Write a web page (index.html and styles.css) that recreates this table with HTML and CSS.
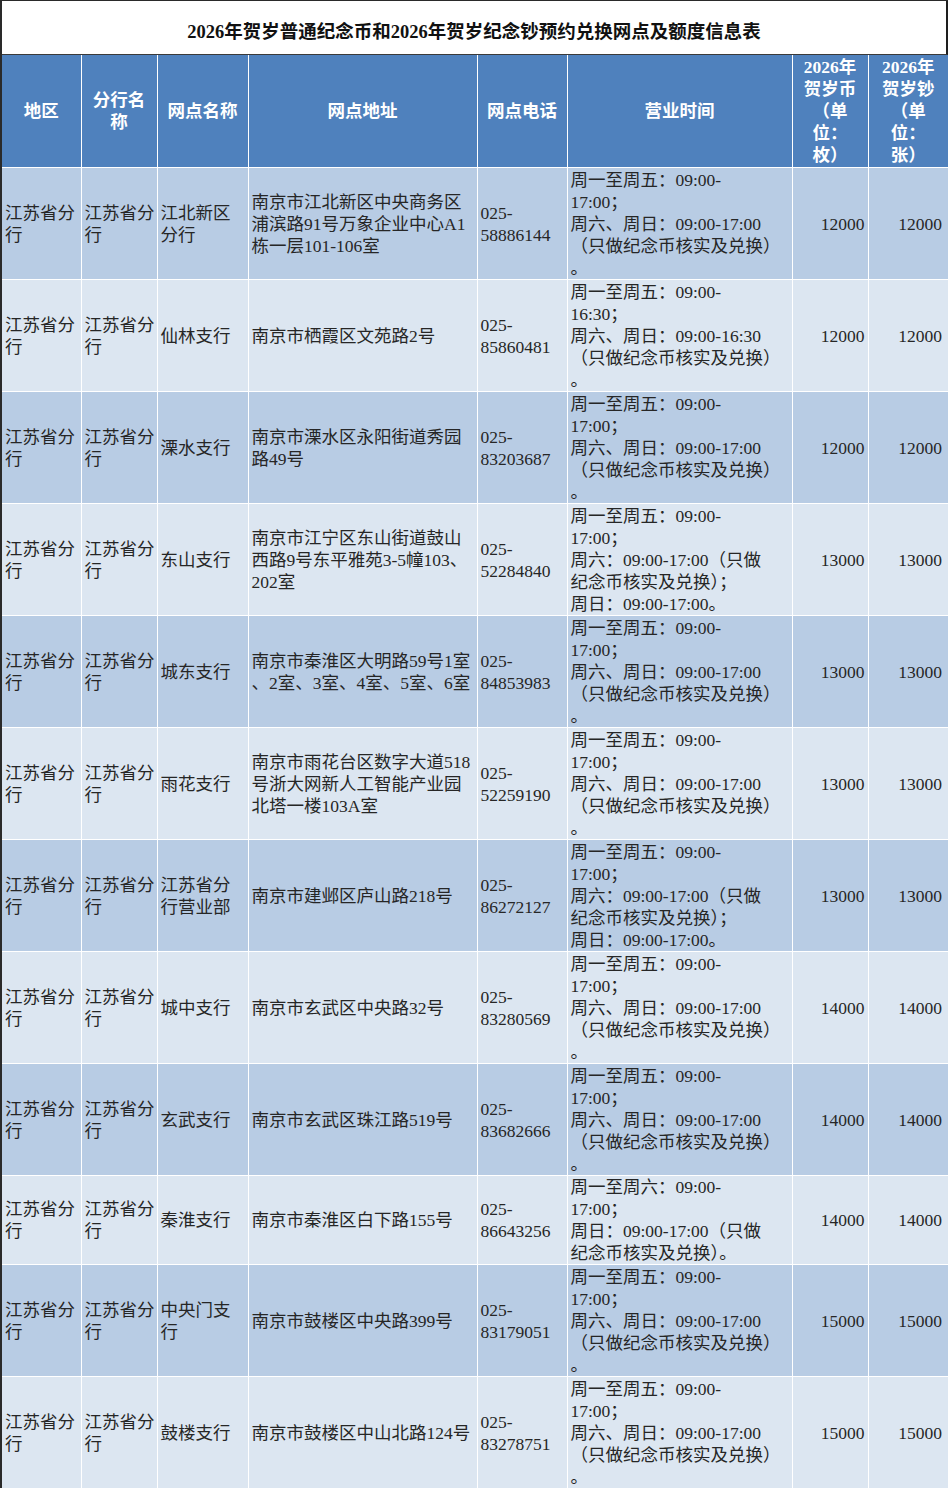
FILE: index.html
```html
<!DOCTYPE html>
<html lang="zh-CN">
<head>
<meta charset="utf-8">
<title>2026年贺岁纪念币钞预约兑换网点</title>
<link rel="stylesheet" href="styles.css">
</head>
<body>
<div class="sheet">
  <div class="title">2026年贺岁普通纪念币和2026年贺岁纪念钞预约兑换网点及额度信息表</div>
  <table class="grid">
    <colgroup>
      <col class="c1"><col class="c2"><col class="c3"><col class="c4"><col class="c5"><col class="c6"><col class="c7"><col class="c8">
    </colgroup>
    <thead>
      <tr class="head">
        <th>地区</th>
        <th>分行名<br>称</th>
        <th>网点名称</th>
        <th>网点地址</th>
        <th>网点电话</th>
        <th>营业时间</th>
        <th>2026年<br>贺岁币<br>（单<br>位：<br>枚）</th>
        <th>2026年<br>贺岁钞<br>（单<br>位：<br>张）</th>
      </tr>
    </thead>
    <tbody>
      <tr class="dark r5">
        <td>江苏省分<br>行</td><td>江苏省分<br>行</td><td>江北新区<br>分行</td>
        <td>南京市江北新区中央商务区<br>浦滨路91号万象企业中心A1<br>栋一层101-106室</td>
        <td>025-<br>58886144</td>
        <td>周一至周五：09:00-<br>17:00；<br>周六、周日：09:00-17:00<br>（只做纪念币核实及兑换）<br>。</td>
        <td class="num">12000</td><td class="num">12000</td>
      </tr>
      <tr class="light r5">
        <td>江苏省分<br>行</td><td>江苏省分<br>行</td><td>仙林支行</td>
        <td>南京市栖霞区文苑路2号</td>
        <td>025-<br>85860481</td>
        <td>周一至周五：09:00-<br>16:30；<br>周六、周日：09:00-16:30<br>（只做纪念币核实及兑换）<br>。</td>
        <td class="num">12000</td><td class="num">12000</td>
      </tr>
      <tr class="dark r5">
        <td>江苏省分<br>行</td><td>江苏省分<br>行</td><td>溧水支行</td>
        <td>南京市溧水区永阳街道秀园<br>路49号</td>
        <td>025-<br>83203687</td>
        <td>周一至周五：09:00-<br>17:00；<br>周六、周日：09:00-17:00<br>（只做纪念币核实及兑换）<br>。</td>
        <td class="num">12000</td><td class="num">12000</td>
      </tr>
      <tr class="light r5">
        <td>江苏省分<br>行</td><td>江苏省分<br>行</td><td>东山支行</td>
        <td>南京市江宁区东山街道鼓山<br>西路9号东平雅苑3-5幢103、<br>202室</td>
        <td>025-<br>52284840</td>
        <td>周一至周五：09:00-<br>17:00；<br>周六：09:00-17:00（只做<br>纪念币核实及兑换）；<br>周日：09:00-17:00。</td>
        <td class="num">13000</td><td class="num">13000</td>
      </tr>
      <tr class="dark r5">
        <td>江苏省分<br>行</td><td>江苏省分<br>行</td><td>城东支行</td>
        <td>南京市秦淮区大明路59号1室<br>、2室、3室、4室、5室、6室</td>
        <td>025-<br>84853983</td>
        <td>周一至周五：09:00-<br>17:00；<br>周六、周日：09:00-17:00<br>（只做纪念币核实及兑换）<br>。</td>
        <td class="num">13000</td><td class="num">13000</td>
      </tr>
      <tr class="light r5">
        <td>江苏省分<br>行</td><td>江苏省分<br>行</td><td>雨花支行</td>
        <td>南京市雨花台区数字大道518<br>号浙大网新人工智能产业园<br>北塔一楼103A室</td>
        <td>025-<br>52259190</td>
        <td>周一至周五：09:00-<br>17:00；<br>周六、周日：09:00-17:00<br>（只做纪念币核实及兑换）<br>。</td>
        <td class="num">13000</td><td class="num">13000</td>
      </tr>
      <tr class="dark r5">
        <td>江苏省分<br>行</td><td>江苏省分<br>行</td><td>江苏省分<br>行营业部</td>
        <td>南京市建邺区庐山路218号</td>
        <td>025-<br>86272127</td>
        <td>周一至周五：09:00-<br>17:00；<br>周六：09:00-17:00（只做<br>纪念币核实及兑换）；<br>周日：09:00-17:00。</td>
        <td class="num">13000</td><td class="num">13000</td>
      </tr>
      <tr class="light r5">
        <td>江苏省分<br>行</td><td>江苏省分<br>行</td><td>城中支行</td>
        <td>南京市玄武区中央路32号</td>
        <td>025-<br>83280569</td>
        <td>周一至周五：09:00-<br>17:00；<br>周六、周日：09:00-17:00<br>（只做纪念币核实及兑换）<br>。</td>
        <td class="num">14000</td><td class="num">14000</td>
      </tr>
      <tr class="dark r5">
        <td>江苏省分<br>行</td><td>江苏省分<br>行</td><td>玄武支行</td>
        <td>南京市玄武区珠江路519号</td>
        <td>025-<br>83682666</td>
        <td>周一至周五：09:00-<br>17:00；<br>周六、周日：09:00-17:00<br>（只做纪念币核实及兑换）<br>。</td>
        <td class="num">14000</td><td class="num">14000</td>
      </tr>
      <tr class="light r4">
        <td>江苏省分<br>行</td><td>江苏省分<br>行</td><td>秦淮支行</td>
        <td>南京市秦淮区白下路155号</td>
        <td>025-<br>86643256</td>
        <td>周一至周六：09:00-<br>17:00；<br>周日：09:00-17:00（只做<br>纪念币核实及兑换）。</td>
        <td class="num">14000</td><td class="num">14000</td>
      </tr>
      <tr class="dark r5">
        <td>江苏省分<br>行</td><td>江苏省分<br>行</td><td>中央门支<br>行</td>
        <td>南京市鼓楼区中央路399号</td>
        <td>025-<br>83179051</td>
        <td>周一至周五：09:00-<br>17:00；<br>周六、周日：09:00-17:00<br>（只做纪念币核实及兑换）<br>。</td>
        <td class="num">15000</td><td class="num">15000</td>
      </tr>
      <tr class="light r5">
        <td>江苏省分<br>行</td><td>江苏省分<br>行</td><td>鼓楼支行</td>
        <td>南京市鼓楼区中山北路124号</td>
        <td>025-<br>83278751</td>
        <td>周一至周五：09:00-<br>17:00；<br>周六、周日：09:00-17:00<br>（只做纪念币核实及兑换）<br>。</td>
        <td class="num">15000</td><td class="num">15000</td>
      </tr>
    </tbody>
  </table>
</div>
</body>
</html>
```

FILE: styles.css
```css
html, body {
  margin: 0;
  padding: 0;
  background: #ffffff;
}

body {
  font-family: "Liberation Serif", "Noto Sans CJK SC", serif;
  color: #262626;
  overflow: hidden;
}

.sheet {
  width: 948px;
  box-sizing: border-box;
  border-left: 2px solid #2a2a2a;
  border-top: 1px solid #2a2a2a;
}

.title {
  height: 54px;
  box-sizing: border-box;
  border-right: 2px solid #1e1e1e;
  border-bottom: 1px solid #3a3a3a;
  display: flex;
  align-items: center;
  justify-content: center;
  font-weight: bold;
  font-size: 18.5px;
  color: #111111;
  padding-top: 4px;
}

.grid {
  width: 946px;
  table-layout: fixed;
  border-collapse: collapse;
  border-spacing: 0;
}

.c1 { width: 79px; }
.c2 { width: 76px; }
.c3 { width: 91px; }
.c4 { width: 229px; }
.c5 { width: 90px; }
.c6 { width: 225px; }
.c7 { width: 76px; }
.c8 { width: 80px; }

.grid th,
.grid td {
  border: 1px solid #ffffff;
  padding: 0 3px;
  font-size: 17.5px;
  line-height: 22px;
  vertical-align: middle;
  text-align: left;
  white-space: nowrap;
  overflow: hidden;
}

.grid th:first-child,
.grid td:first-child {
  border-left: none;
}

.grid th:last-child,
.grid td:last-child {
  border-right: none;
}

.head th {
  background: #4f81bd;
  color: #ffffff;
  font-weight: bold;
  text-align: center;
  border-top: none;
  height: 112px;
}

.dark td {
  background: #b8cce4;
}

.light td {
  background: #dce6f1;
}

.r5 td {
  height: 111px;
}

.r4 td {
  height: 88px;
}

.grid td.num {
  text-align: right;
  padding-right: 3px;
}

.grid td.num:last-child {
  padding-right: 6px;
}
```
